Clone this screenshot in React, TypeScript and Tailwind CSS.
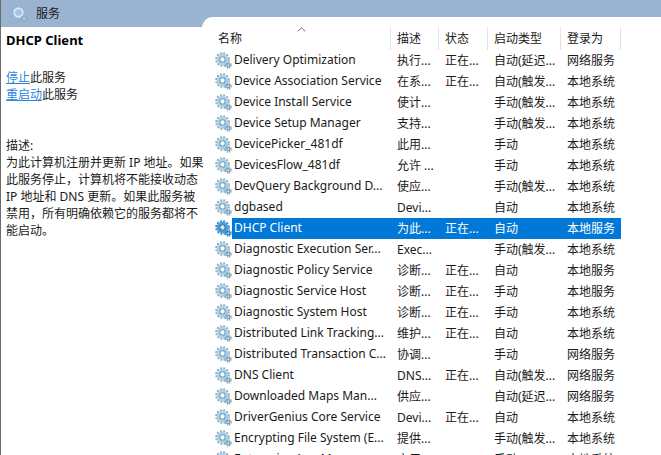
type Service = {
  name: string;
  description: string;
  status?: string;
  startup: string;
  logon: string;
};

const SELECTED = "DHCP Client";

const services: Service[] = [
  { name: "Delivery Optimization", description: "执行...", status: "正在...", startup: "自动(延迟...", logon: "网络服务" },
  { name: "Device Association Service", description: "在系...", status: "正在...", startup: "自动(触发...", logon: "本地系统" },
  { name: "Device Install Service", description: "使计...", startup: "手动(触发...", logon: "本地系统" },
  { name: "Device Setup Manager", description: "支持...", startup: "手动(触发...", logon: "本地系统" },
  { name: "DevicePicker_481df", description: "此用...", startup: "手动", logon: "本地系统" },
  { name: "DevicesFlow_481df", description: "允许 ...", startup: "手动", logon: "本地系统" },
  { name: "DevQuery Background D...", description: "使应...", startup: "手动(触发...", logon: "本地系统" },
  { name: "dgbased", description: "Devi...", startup: "自动", logon: "本地系统" },
  { name: "DHCP Client", description: "为此...", status: "正在...", startup: "自动", logon: "本地服务" },
  { name: "Diagnostic Execution Ser...", description: "Exec...", startup: "手动(触发...", logon: "本地系统" },
  { name: "Diagnostic Policy Service", description: "诊断...", status: "正在...", startup: "自动", logon: "本地服务" },
  { name: "Diagnostic Service Host", description: "诊断...", status: "正在...", startup: "手动", logon: "本地服务" },
  { name: "Diagnostic System Host", description: "诊断...", status: "正在...", startup: "手动", logon: "本地系统" },
  { name: "Distributed Link Tracking...", description: "维护...", status: "正在...", startup: "自动", logon: "本地系统" },
  { name: "Distributed Transaction C...", description: "协调...", startup: "手动", logon: "网络服务" },
  { name: "DNS Client", description: "DNS...", status: "正在...", startup: "自动(触发...", logon: "网络服务" },
  { name: "Downloaded Maps Man...", description: "供应...", startup: "自动(延迟...", logon: "网络服务" },
  { name: "DriverGenius Core Service", description: "Devi...", status: "正在...", startup: "自动", logon: "本地系统" },
  { name: "Encrypting File System (E...", description: "提供...", startup: "手动(触发...", logon: "本地系统" },
  { name: "Enterprise App Man...", description: "启用...", startup: "手动", logon: "本地系统" },
];

const descriptionLines = [
  "为此计算机注册并更新 IP 地址。如果",
  "此服务停止，计算机将不能接收动态",
  "IP 地址和 DNS 更新。如果此服务被",
  "禁用，所有明确依赖它的服务都将不",
  "能启动。",
];

export default function App() {
  return (
    <main
      lang="zh-CN"
      className="flex h-screen overflow-hidden border-l border-[#6b6b6b] bg-white font-['Noto_Sans','Noto_Sans_CJK_SC',sans-serif] text-xs text-[#1a1a1a]"
    >
      <aside className="relative z-10 w-[201px] shrink-0">
        <header className="flex h-[27px] items-center gap-2 bg-[#9ab3d1] pl-[11px]">
          <HeaderIcon />
          <h1>服务</h1>
        </header>
        <div className="px-[5px] pt-[5px] leading-[17px] whitespace-nowrap">
          <h2 className="text-[13px] font-bold text-black">DHCP Client</h2>
          <div className="pt-5">
            <p>
              <a href="#stop" className="text-[#2a86de] underline">停止</a>此服务
            </p>
            <p>
              <a href="#restart" className="text-[#2a86de] underline">重启动</a>此服务
            </p>
          </div>
          <p className="pt-[34px]">描述:</p>
          {descriptionLines.map((line) => (
            <p key={line}>{line}</p>
          ))}
        </div>
      </aside>

      <section className="min-w-0 flex-1 bg-[#9ab3d1] pt-[17px]">
        <div className="h-full overflow-hidden rounded-tl-[11px] bg-white pt-[10px] pl-[10px]">
          <table className="w-[409px] table-fixed border-collapse text-left leading-5 whitespace-nowrap">
            <colgroup>
              <col className="w-[179px]" />
              <col className="w-12" />
              <col className="w-[49px]" />
              <col className="w-[73px]" />
              <col className="w-[60px]" />
            </colgroup>
            <thead>
              <tr className="h-[23px]">
                <HeadCell label="名称" sorted />
                <HeadCell label="描述" />
                <HeadCell label="状态" />
                <HeadCell label="启动类型" />
                <HeadCell label="登录为" />
              </tr>
            </thead>
            <tbody>
              {services.map((service) => (
                <ServiceRow key={service.name} service={service} selected={service.name === SELECTED} />
              ))}
            </tbody>
          </table>
        </div>
      </section>
    </main>
  );
}

function HeadCell({ label, sorted = false }: { label: string; sorted?: boolean }) {
  return (
    <th className="relative p-0 font-normal">
      <div className="h-[23px] border-r border-[#e2e2e2] pl-[6px] leading-[23px]">{label}</div>
      {sorted ? (
        <span className="absolute inset-x-0 top-0 flex justify-center">
          <svg viewBox="0 0 9 5" className="h-[5px] w-[9px]" fill="none" stroke="#6a6a6a">
            <path d="M0.7 4.4 L4.5 0.8 L8.3 4.4" />
          </svg>
        </span>
      ) : null}
    </th>
  );
}

function ServiceRow({ service, selected }: { service: Service; selected: boolean }) {
  const cell = selected ? "bg-[#0078d7] p-0 pl-[6px] text-white" : "p-0 pl-[6px]";

  return (
    <tr className="h-[21px]">
      <td className="p-0 pl-[3px]">
        <div className="flex items-center">
          <GearIcon selected={selected} />
          <span className={selected ? "h-[21px] flex-1 bg-[#0078d7] pl-0.5 text-white" : "h-[21px] flex-1 pl-0.5"}>
            {service.name}
          </span>
        </div>
      </td>
      <td className={cell}>{service.description}</td>
      <td className={cell}>{service.status}</td>
      <td className={cell}>{service.startup}</td>
      <td className={cell}>{service.logon}</td>
    </tr>
  );
}

function GearIcon({ selected }: { selected: boolean }) {
  const teeth = selected ? "#3c88bd" : "#8fa9b8";
  const body = selected ? "#4a9fda" : "#a9d3ec";
  const rim = selected ? "#2272b0" : "#6f9bb8";

  return (
    <svg viewBox="0 0 17 17" className="size-[17px] shrink-0" fill="none">
      <circle cx="7.5" cy="7.5" r="6.3" stroke={teeth} strokeWidth="2" strokeDasharray="1.9 1.4" />
      <circle cx="7.5" cy="7.5" r="4.4" stroke={body} strokeWidth="2.8" />
      <circle cx="7.5" cy="7.5" r="2.7" fill={selected ? "#d5ebfa" : "#ffffff"} stroke={rim} strokeWidth="1.1" />
      <circle cx="13.3" cy="13.2" r="2.7" stroke={teeth} strokeWidth="1.9" strokeDasharray="1.2 0.92" />
      <circle cx="13.3" cy="13.2" r="1.5" fill="#e6f3fb" stroke={rim} strokeWidth="1.2" />
    </svg>
  );
}

function HeaderIcon() {
  return (
    <svg viewBox="0 0 16 16" className="size-4 shrink-0" fill="none">
      <circle cx="6.5" cy="6.5" r="5.6" stroke="#86b4d3" strokeWidth="1.2" strokeDasharray="1.6 1.2" />
      <circle cx="6.5" cy="6.5" r="4.2" fill="#a9bfda" stroke="#d3eaf8" strokeWidth="1.9" />
      <circle cx="12.4" cy="12.6" r="2.5" stroke="#7f9fba" strokeWidth="1.5" strokeDasharray="1.1 0.7" />
      <circle cx="12.4" cy="12.6" r="1.3" stroke="#bed5e6" />
    </svg>
  );
}
